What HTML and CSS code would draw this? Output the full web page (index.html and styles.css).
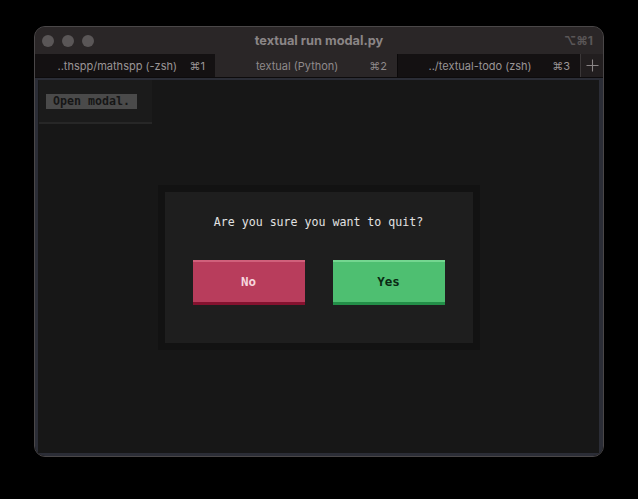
FILE: index.html
```html
<!DOCTYPE html>
<html>
<head>
<meta charset="utf-8">
<link rel="stylesheet" href="styles.css">
</head>
<body>
<div class="window">
  <div class="titlebar">
    <div class="lights"><span class="light"></span><span class="light"></span><span class="light"></span></div>
    <div class="title">textual run modal.py</div>
    <div class="title-key">⌥⌘1</div>
  </div>
  <div class="tabs">
    <div class="tab tab-1"><span class="tab-label">..thspp/mathspp (-zsh)</span><span class="tab-key">⌘1</span></div>
    <div class="tab tab-2 active"><span class="tab-label">textual (Python)</span><span class="tab-key">⌘2</span></div>
    <div class="tab tab-3"><span class="tab-label">../textual-todo (zsh)</span><span class="tab-key">⌘3</span></div>
    <div class="tab-plus">
      <svg width="13" height="13" viewBox="0 0 13 13"><path d="M6.5 0.5v12M0.5 6.5h12" stroke="#8a8586" stroke-width="1.1" fill="none"/></svg>
    </div>
  </div>
  <div class="term">
    <div class="open-panel">
      <div class="open-btn">Open modal.</div>
    </div>
    <div class="overlay">
      <div class="modal">
        <div class="question">Are you sure you want to quit?</div>
        <div class="buttons">
          <div class="btn btn-no">No</div>
          <div class="btn btn-yes">Yes</div>
        </div>
      </div>
    </div>
  </div>
</div>
</body>
</html>
```

FILE: styles.css
```css
html, body {
  margin: 0;
  padding: 0;
}
body {
  background: #000;
  width: 638px;
  height: 499px;
  overflow: hidden;
  font-family: Inter, "Liberation Sans", sans-serif;
}
.window {
  margin: 26px 0 0 34px;
  width: 570px;
  height: 431px;
  box-sizing: border-box;
  border: 1px solid #4a4748;
  border-radius: 11px;
  overflow: hidden;
  display: flex;
  flex-direction: column;
  background: #2a2627;
}
.titlebar {
  height: 27px;
  flex: none;
  display: flex;
  align-items: center;
  position: relative;
  background: #2a2627;
}
.lights {
  display: flex;
  gap: 8px;
  padding-left: 7px;
}
.light {
  width: 12px;
  height: 12px;
  border-radius: 50%;
  background: #5a5657;
}
.title {
  position: absolute;
  left: 0;
  right: 0;
  text-align: center;
  color: #8a8586;
  font-weight: 700;
  font-size: 12.8px;
  pointer-events: none;
}
.title-key {
  margin-left: auto;
  padding-right: 10px;
  color: #5a5657;
  font-weight: 700;
  font-size: 12px;
}
.tabs {
  height: 23px;
  flex: none;
  display: flex;
  background: #141112;
  border-bottom: 1px solid #0d0b0c;
}
.tab {
  display: flex;
  align-items: center;
  padding: 0 10px;
  box-sizing: border-box;
  font-size: 11px;
  color: #9a9596;
  background: #141112;
}
.tab-1 { width: 180px; }
.tab-2 { width: 182px; }
.tab-3 { width: 183px; border-left: 1px solid #0b090a; }
.tab.active {
  background: #2a2627;
  color: #8f8a8b;
}
.tab-label {
  flex: 1;
  text-align: center;
}
.tab-key {
  font-size: 11px;
}
.tab-plus {
  flex: 1;
  display: flex;
  align-items: center;
  justify-content: center;
  background: #221e1f;
  border-left: 1px solid #3b3738;
}
.term {
  flex: 1;
  position: relative;
  background: #171717;
  border-style: solid;
  border-color: #2b2d36;
  border-width: 2px 4px 3px 3px;
  font-family: "DejaVu Sans Mono", "Liberation Mono", monospace;
  font-size: 11.6px;
}
.open-panel {
  width: 113px;
  height: 42px;
  margin-left: 1px;
  background: #1b1b1b;
  border-bottom: 2px solid #272727;
  display: flex;
  align-items: flex-start;
}
.open-btn {
  margin: 14px 0 0 7px;
  width: 91px;
  height: 15px;
  line-height: 15px;
  background: #4a4a4a;
  color: #161616;
  font-weight: 700;
  text-align: center;
}
.overlay {
  position: absolute;
  inset: 0;
  display: flex;
  align-items: center;
  justify-content: center;
}
.modal {
  width: 308px;
  height: 151px;
  background: #1e1e1e;
  border: 7px solid #121212;
  display: flex;
  flex-direction: column;
  align-items: center;
  margin-top: 1px;
}
.question {
  margin-top: 22px;
  color: #e2e2e2;
  line-height: 16px;
}
.buttons {
  margin-top: 30px;
  display: flex;
  gap: 28px;
}
.btn {
  width: 112px;
  height: 45px;
  box-sizing: border-box;
  display: flex;
  align-items: center;
  justify-content: center;
  font-weight: 700;
  font-size: 12.5px;
  border-top: 2px solid;
  border-bottom: 3px solid;
}
.btn-no {
  background: #b83d5c;
  border-top-color: #d0607b;
  border-bottom-color: #84122f;
  color: #f6d6de;
}
.btn-yes {
  background: #4ebf71;
  border-top-color: #74d690;
  border-bottom-color: #238f48;
  color: #0a2a13;
}
```
